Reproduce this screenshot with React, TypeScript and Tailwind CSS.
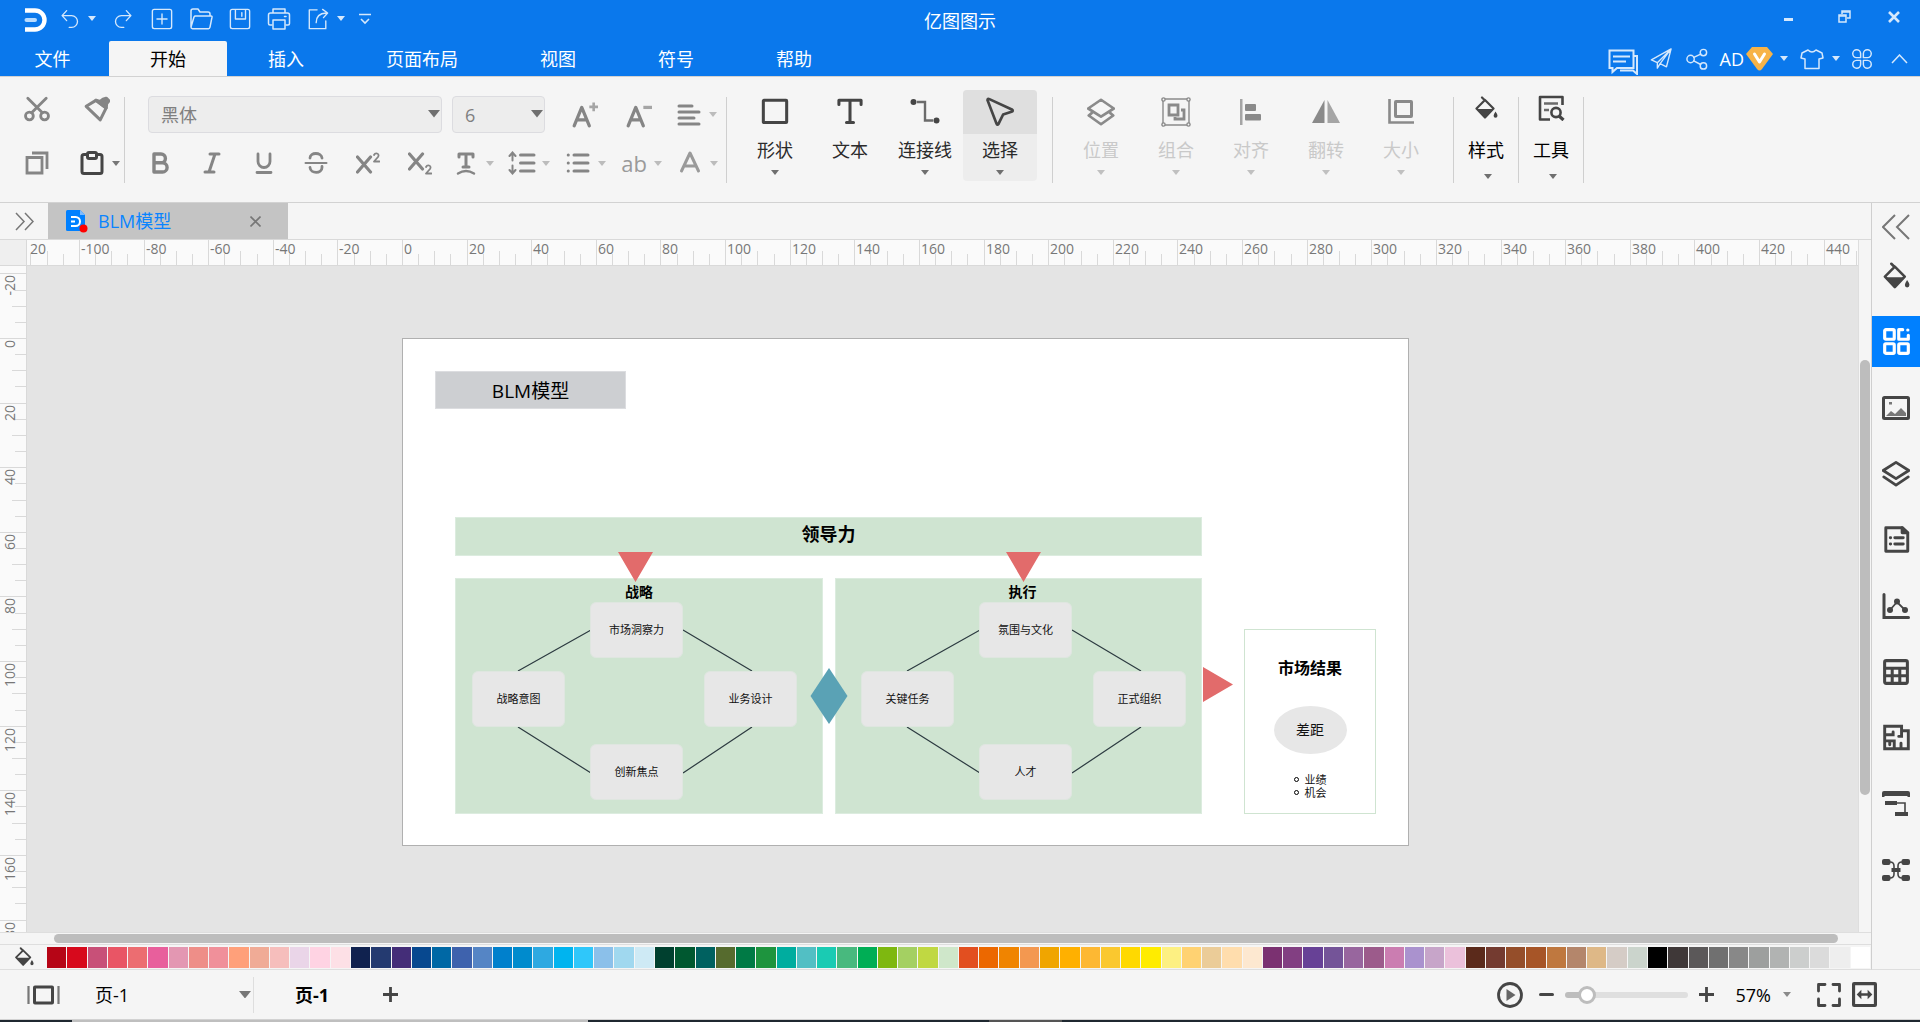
import { useState } from "react";
import type { ReactNode } from "react";

const SWATCHES = [
    "#b60516", "#d7091c", "#c85078", "#e95565", "#ec6d71", "#e85f9c", "#e397b2", "#ee8e88", "#f0909a", "#ffa07a",
    "#f0ab96", "#f6bebc", "#ead5e8", "#ffd3e3", "#fde0e6", "#10224f", "#243a70", "#442d78", "#07488f", "#0068a5",
    "#3e62ad", "#5585c5", "#0080cc", "#008bcd", "#2ea9e1", "#00b4ef", "#2fc7fa", "#8bc0ea", "#a0d8ef", "#ceeaf5",
    "#00402f", "#005830", "#006160", "#566b2e", "#007a45", "#1e943e", "#00ad9f", "#52bfc4", "#1acbb3", "#48b97e",
    "#00ae55", "#7eb810", "#a4d062", "#c0d842", "#cfe7ca", "#e24f20", "#ec6800", "#f08400", "#f39850", "#f0a500",
    "#ffb000", "#fdb833", "#fac82f", "#ffd900", "#ffec00", "#fdf082", "#ffd272", "#ebcc98", "#ffddad", "#fde8d0",
    "#7b3171", "#823f82", "#674196", "#745498", "#98669e", "#9c5b8b", "#cb7db1", "#aa92ce", "#c7a5c9", "#ebc1db",
    "#5b2a1b", "#743b30", "#954e2a", "#a75527", "#bf783f", "#b4866b", "#deb887", "#d5ccc6", "#cbd4cc", "#000000",
    "#3f3838", "#5b5859", "#707070", "#888888", "#9d9f9e", "#b1b3b2", "#cccecd", "#dbdbdb", "#eeeeee", "#ffffff",
];

const MENUS = ["插入", "页面布局", "视图", "符号", "帮助"];

// pixels per ruler unit at the current zoom
const SCALE = 3.231;

interface IconProps {
    children: ReactNode;
    className?: string;
    stroke?: number;
}

function Icon({ children, className = "size-6", stroke = 2 }: IconProps) {
    return (
        <svg viewBox="0 0 24 24" className={className} fill="none" stroke="currentColor" strokeWidth={stroke} strokeLinejoin="round" strokeLinecap="round" aria-hidden="true">
            {children}
        </svg>
    );
}

function Caret({ className = "w-2" }: { className?: string }) {
    return (
        <svg viewBox="0 0 8 5" className={className} fill="currentColor" aria-hidden="true">
            <path d="M0 0h8L4 5z" />
        </svg>
    );
}

function IconButton({ label, className, children }: { label: string; className: string; children: ReactNode }) {
    return (
        <button type="button" aria-label={label} className={`flex shrink-0 items-center justify-center ${className}`}>
            {children}
        </button>
    );
}

function SplitButton({ label, children }: { label: string; children: ReactNode }) {
    return (
        <button type="button" aria-label={label} className="flex w-14 shrink-0 items-center">
            <span className="flex w-10 justify-center">{children}</span>
            <Caret className="w-2 text-[#bcbcbc]" />
        </button>
    );
}

interface ToolButtonProps {
    label: string;
    caret?: boolean;
    active?: boolean;
    disabled?: boolean;
    children: ReactNode;
}

function ToolButton({ label, caret = true, active, disabled, children }: ToolButtonProps) {
    return (
        <button type="button" disabled={disabled} className={`flex h-[91px] w-[74px] flex-col items-center rounded-sm ${active ? "bg-[#ededed]" : ""}`}>
            <span className={`flex h-11 w-full items-center justify-center rounded-t-sm ${active ? "bg-[#dfdfdf]" : ""} ${disabled ? "text-[#8a8a8a]" : "text-[#454545]"}`}>
                {children}
            </span>
            <span className={`mt-1 leading-6 ${disabled ? "text-[#c9c9c9]" : "text-[#2b2b2b]"}`}>{label}</span>
            {caret && <Caret className={`mt-2 w-2 ${disabled ? "text-[#c0c0c0]" : "text-[#6f6f6f]"}`} />}
        </button>
    );
}

function PanelButton({ label, children }: { label: string; children: ReactNode }) {
    return (
        <button type="button" className="mt-[13px] flex h-[91px] w-16 flex-col items-center text-black">
            <span className="flex h-9 items-center text-[#454545]">{children}</span>
            <span className="mt-3 leading-6">{label}</span>
            <Caret className="mt-3 ml-1 w-2 text-[#6f6f6f]" />
        </button>
    );
}

function Divider() {
    return <div className="mt-5 h-[86px] w-px shrink-0 bg-[#cfcfcf]" />;
}

function AppLogo() {
    return (
        <svg viewBox="0 0 24 24" className="h-6 w-6" fill="none" aria-hidden="true">
            <path d="M1 2.5h10a9.5 9.5 0 0 1 0 19H1" stroke="#fff" strokeWidth="4.4" />
            <path d="M2.5 12h8.5" stroke="#b9dcff" strokeWidth="4" strokeLinecap="round" />
        </svg>
    );
}

function Header() {
    return (
        <header className="bg-[#0a78ec] text-[#d5e8fc]">
            <div className="grid h-[41px] grid-cols-[1fr_auto_1fr]">
                <div className="flex h-[31px] items-center self-start">
                    <div className="flex w-[52px] justify-end pr-1 pt-2"><AppLogo /></div>
                    <IconButton label="撤销" className="h-full w-9 pt-1.5">
                        <Icon className="size-5" stroke={1.6}><path d="M8 2 2.500 8 8 14M3 8h11a7 7 0 0 1 0 14h-3" /></Icon>
                    </IconButton>
                    <IconButton label="撤销列表" className="mr-[7px] h-full w-2 pt-1.5"><Caret /></IconButton>
                    <IconButton label="重做" className="h-full w-[39px] pt-1.5">
                        <Icon className="size-5" stroke={1.6}><path d="m16 2 5.500 6-5.500 6M21 8H10a7 7 0 0 0 0 14h3" /></Icon>
                    </IconButton>
                    <IconButton label="新建" className="h-full w-[39px] pt-1.5">
                        <Icon className="size-[22px]" stroke={1.5}><rect x="1.500" y="1.500" width="21" height="21" rx="2" /><path d="M12 6.500v11M6.500 12h11" /></Icon>
                    </IconButton>
                    <IconButton label="打开" className="h-full w-[39px] pt-1.5">
                        <Icon className="size-6" stroke={1.5}><path d="M2 20V4q0-2 2-2h5l2 3h8q2 0 2 2v2M2 20 5 10q.4-1 1.500-1H22q1.200 0 1 1.200l-2 10q-.3 1.500-1.500 1.500H3.500Q2 21.700 2 20" /></Icon>
                    </IconButton>
                    <IconButton label="保存" className="h-full w-[39px] pt-1.5">
                        <Icon className="size-[22px]" stroke={1.5}><rect x="1.500" y="1.500" width="21" height="21" rx="2" /><path d="M7 2v10h11V2M14 5v4" /></Icon>
                    </IconButton>
                    <IconButton label="打印" className="h-full w-[39px] pt-1.5">
                        <Icon className="size-6" stroke={1.5}><path d="M6 6V2h12v4M5 18H3q-1.500 0-1.500-1.500V8Q1.500 6 3.500 6h17q2 0 2 2v8.500Q22.500 18 21 18h-2" /><path d="M6 13h12v9H6zM17.500 9.500h1.500" /></Icon>
                    </IconButton>
                    <IconButton label="导出" className="h-full w-[39px] pt-1.5">
                        <Icon className="size-[22px]" stroke={1.5}><path d="M11 2H2.500v20.500h18V14M10 16q0-10 11-10.500M17 1.500l5.500 4-4.500 5" /></Icon>
                    </IconButton>
                    <IconButton label="导出列表" className="h-full w-2 pt-1.5"><Caret /></IconButton>
                    <IconButton label="自定义" className="ml-2 h-full w-6 pt-1.5">
                        <svg viewBox="0 0 12 12" className="size-3" fill="none" stroke="currentColor" strokeWidth="1.600"><path d="M0 1.500h12M2 6l4 4 4-4" /></svg>
                    </IconButton>
                </div>
                <h1 className="self-center text-lg leading-6 text-white">亿图图示</h1>
                <div className="flex h-[33px] items-center justify-end gap-2 pr-2">
                    <IconButton label="最小化" className="h-6 w-12 pt-1.5"><span className="h-[3px] w-[9px] bg-current" /></IconButton>
                    <IconButton label="还原" className="h-6 w-12">
                        <svg viewBox="0 0 13 13" className="size-[13px]" fill="none" stroke="currentColor" strokeWidth="1.500"><path d="M4 4V1h8v7H9" /><path d="M1 5h7v7H1z" /><path d="M4 2h8M1 6h7" /></svg>
                    </IconButton>
                    <IconButton label="关闭" className="h-6 w-9">
                        <svg viewBox="0 0 12 12" className="size-3" fill="none" stroke="currentColor" strokeWidth="2.600"><path d="m1 1 10 10M11 1 1 11" /></svg>
                    </IconButton>
                </div>
            </div>
            <div className="flex h-[35px] justify-between">
                <nav className="flex text-lg leading-9 text-white">
                    <button type="button" className="w-[109px] pr-1">文件</button>
                    <button type="button" className="rounded-t-xs bg-[#f5f5f5] px-[41px] text-black">开始</button>
                    {MENUS.map((menu) => (
                        <button type="button" key={menu} className="px-[41px]">{menu}</button>
                    ))}
                </nav>
                <div className="flex items-center pr-3">
                    <IconButton label="评论" className="mt-1.5 w-[30px]">
                        <svg viewBox="0 0 30 26" className="h-[26px] w-[30px]" fill="none" stroke="currentColor" strokeWidth="2"><path d="M1.500 1.500h24V19H9l-4.500 4v-4h-3zM5 7.500h17M5 12.500h13M26 7h3v18l-4-3.500H12" /></svg>
                    </IconButton>
                    <IconButton label="发送" className="ml-3 w-[22px]">
                        <Icon className="size-[22px]" stroke={1.5}><path d="M23 1 1.500 13l6.500 3L23 1 11 17l7 3.500zM8 16v6l3-5" /></Icon>
                    </IconButton>
                    <IconButton label="分享" className="ml-3.5 w-[22px]">
                        <Icon className="size-[22px]" stroke={1.6}><circle cx="5" cy="12" r="4" /><circle cx="19" cy="5" r="3.500" /><circle cx="19" cy="19.500" r="3.500" /><path d="m8.500 10.200 7.500-3.600M8.500 14l7.500 4" /></Icon>
                    </IconButton>
                    <button type="button" aria-label="AD" className="ml-3 flex items-center gap-[2px] text-lg text-white">
                        AD
                        <svg viewBox="0 0 27 25" className="h-[25px] w-[27px]" aria-hidden="true">
                            <path d="M6 1h15l6 7-11 15q-2.500 3-5 0L0 8z" fill="#f7b348" />
                            <path d="m8.500 8 5 8 5-8" fill="none" stroke="#fff" strokeWidth="3" strokeLinecap="round" strokeLinejoin="round" />
                        </svg>
                    </button>
                    <Caret className="ml-[7px] w-2" />
                    <IconButton label="皮肤" className="ml-3 w-6">
                        <Icon className="size-6" stroke={1.5}><path d="M8 3q4 4 8 0l6 3 1 5-4 1v9.500H5V12l-4-1 1-5z" /></Icon>
                    </IconButton>
                    <Caret className="ml-2 w-2" />
                    <IconButton label="应用" className="ml-[11px] w-[22px]">
                        <Icon className="size-[22px]" stroke={1.6}><path d="M10.500 10.500H6A4.300 4.300 0 1 1 10.500 6zM13.500 10.500V6a4.300 4.300 0 1 1 4.500 4.500zM10.500 13.500V18A4.300 4.300 0 1 1 6 13.500zM13.500 13.500H18a4.300 4.300 0 1 1-4.500 4.500z" /></Icon>
                    </IconButton>
                    <IconButton label="收起功能区" className="ml-[18px] w-[17px]">
                        <svg viewBox="0 0 17 10" className="w-[17px]" fill="none" stroke="currentColor" strokeWidth="1.500"><path d="m1 9 7.500-8L16 9" /></svg>
                    </IconButton>
                </div>
            </div>
        </header>
    );
}

function BucketIcon({ className }: { className?: string }) {
    return (
        <Icon className={className}>
            <path d="m8 1.500 3 3M11 4 2.500 12.500l8.500 9 8.500-9z" strokeWidth="2.200" />
            <path d="M3 13h16l-8 8.500z" fill="currentColor" stroke="none" />
            <path d="M21.500 15.500q2.200 3 2 4.300a1.900 1.900 0 0 1-3.900 0q0-1.300 1.900-4.300" fill="currentColor" stroke="none" />
        </Icon>
    );
}

function Ribbon() {
    return (
        <section className="flex h-[127px] border-y border-[#d2d2d2] bg-[#f5f5f5] text-lg">
            <div className="grid w-[124px] grid-cols-[74px_50px] grid-rows-[64px_44px] text-[#858585]">
                <IconButton label="剪切" className="w-[74px]">
                    <Icon className="size-[26px]" stroke={2.6}><circle cx="5" cy="18.500" r="3.600" /><circle cx="19" cy="18.500" r="3.600" /><path d="M3.500 2 17 15.500M20.500 2 7 15.500" /></Icon>
                </IconButton>
                <IconButton label="格式刷" className="w-[46px]">
                    <Icon className="size-[26px]" stroke={2.8}><path d="m2 9.500 9-5.500 9.500 7L15 22z" /><path d="m11 4 9.500 7 .5-4 2-2.500-2.500-2.500-3 1-2.500 2z" fill="currentColor" /></Icon>
                </IconButton>
                <IconButton label="复制" className="w-[74px]">
                    <Icon className="size-6" stroke={2.8}><path d="M2 6.500h15V22H2zM7 2h15v16" strokeLinejoin="miter" strokeLinecap="butt" /></Icon>
                </IconButton>
                <button type="button" aria-label="粘贴" className="flex items-center gap-2 pl-1.5 text-[#454545]">
                    <Icon className="size-6" stroke={3}><rect x="2" y="3.500" width="20" height="19" rx="2" /><rect x="7.500" y="1.500" width="9" height="6" rx="1.500" fill="#f5f5f5" /></Icon>
                    <Caret className="w-2 text-[#777]" />
                </button>
            </div>
            <Divider />
            <div className="flex flex-col">
                <div className="mt-[19px] flex h-[37px] items-center pl-[23px] text-[#858585]">
                    <div className="relative h-full w-[294px]">
                        <select aria-label="字体" className="h-full w-full appearance-none rounded-sm border border-[#dcdce0] bg-[#ededed] px-3 text-lg leading-6 text-[#808080]">
                            <option>黑体</option>
                        </select>
                        <Caret className="pointer-events-none absolute top-3.5 right-0.5 w-3 text-[#6f6f6f]" />
                    </div>
                    <div className="relative ml-2.5 h-full w-[93px]">
                        <select aria-label="字号" className="h-full w-full appearance-none rounded-sm border border-[#dcdce0] bg-[#ededed] px-3 text-lg leading-6 text-[#808080]">
                            <option>6</option>
                        </select>
                        <Caret className="pointer-events-none absolute top-3.5 right-0.5 w-3 text-[#6f6f6f]" />
                    </div>
                    <IconButton label="增大字号" className="ml-[13px] w-[54px]">
                        <Icon className="size-[26px]" stroke={3}><path d="M2 22 9 5l7 17M4.500 16.500h9" /><path d="M16 4.500h8M20 .5v8" strokeWidth="2.400" strokeLinecap="butt" stroke="#a5a5a5" /></Icon>
                    </IconButton>
                    <IconButton label="减小字号" className="w-[54px]">
                        <Icon className="size-[26px]" stroke={3}><path d="M2 22 9 5l7 17M4.500 16.500h9" /><path d="M16 5h8" strokeWidth="3" strokeLinecap="butt" stroke="#a5a5a5" /></Icon>
                    </IconButton>
                    <div className="ml-[3px] flex">
                        <SplitButton label="对齐方式">
                            <Icon className="size-6" stroke={3}><path d="M2 3h13M2 9h20M2 15h15M2 21h20" /></Icon>
                        </SplitButton>
                    </div>
                </div>
                <div className="mt-[15px] flex h-[30px] items-center pl-[9px] text-[#858585]">
                    <IconButton label="加粗" className="w-[52px]"><Icon className="size-6"><path d="M6 3h7a4.300 4.300 0 0 1 0 8.800H6zM6 11.800h8.500a4.500 4.500 0 0 1 0 9.200H6z" strokeWidth="3.400" /></Icon></IconButton>
                    <IconButton label="倾斜" className="w-[52px]"><Icon className="size-6" stroke={3}><path d="M10 3h9M5 21h9M15 3 9 21" /></Icon></IconButton>
                    <IconButton label="下划线" className="w-[52px]"><Icon className="size-6" stroke={2.8}><path d="M6 3v7.500a6 6 0 0 0 12 0V3M5 21.500h14" /></Icon></IconButton>
                    <IconButton label="删除线" className="w-[52px]"><Icon className="size-6"><path d="M1.500 12h21" /><path d="M18 7c-.5-6-12-6-12 0M6 16.500c.5 6.500 12 6.500 12 0v-1" strokeWidth="2.800" /></Icon></IconButton>
                    <IconButton label="上标" className="w-[52px]"><Icon className="size-6" stroke={3.2}><path d="m1.500 6 13 15M14.500 6l-13 15" /><path d="M18 4q1-2 3-1.500 2.500 1 1 3.500L18 10.500h5.500" strokeWidth="1.800" /></Icon></IconButton>
                    <IconButton label="下标" className="w-[52px]"><Icon className="size-6" stroke={3.2}><path d="m1.500 3 13 15M14.500 3l-13 15" /><path d="M18 16q1-2 3-1.500 2.500 1 1 3.500L18 22.500h5.500" strokeWidth="1.800" /></Icon></IconButton>
                    <SplitButton label="文字方向"><Icon className="size-6"><path d="M5 6V3h14v3M12 3v13M9 16h6" strokeWidth="3" /><path d="M4 22.500q8-5 16 0" strokeWidth="2.400" /></Icon></SplitButton>
                    <SplitButton label="行距">
                        <svg viewBox="0 0 28 24" className="h-6 w-7" fill="none" stroke="currentColor" strokeWidth="3" strokeLinecap="round"><path d="M12.500 4H26M12.500 12H26M12.500 20H26" /><path d="M4.500 2.500v7M1.500 5l3-3.500 3 3.500M4.500 14.500v7M1.500 19l3 3.500 3-3.500" strokeWidth="2" /></svg>
                    </SplitButton>
                    <SplitButton label="项目符号"><Icon className="size-6" stroke={3}><path d="M8 4h14M8 12h14M8 20h14M2.200 4h.1M2.200 12h.1M2.200 20h.1" /></Icon></SplitButton>
                    <SplitButton label="突出显示"><span className="font-['Open_Sans',sans-serif] text-[22px] leading-6 font-medium text-[#9a9a9a]">ab</span></SplitButton>
                    <SplitButton label="字体颜色"><Icon className="size-6 text-[#9a9a9a]" stroke={3}><path d="m3.500 20 8.500-18 8.500 18M6.500 15h11" /></Icon></SplitButton>
                </div>
            </div>
            <Divider />
            <div className="flex gap-px pt-[13px] pr-[15px] pl-[11px]">
                <ToolButton label="形状">
                    <Icon className="size-7" stroke={2.6}><rect x="2" y="2" width="20" height="19" rx=".5" /></Icon>
                </ToolButton>
                <ToolButton label="文本" caret={false}>
                    <Icon className="size-7" stroke={2.6}><path d="M2.500 5.500V2h19v3.500M12 2v19M9 21h6" /></Icon>
                </ToolButton>
                <ToolButton label="连接线">
                    <svg viewBox="0 0 30 26" className="h-[26px] w-[30px]" fill="none"><path d="M7 3h8v18.500h8" stroke="#6b6b6b" strokeWidth="2.400" /><circle cx="3.500" cy="3" r="3" fill="currentColor" /><circle cx="26.500" cy="21.500" r="3" fill="currentColor" /></svg>
                </ToolButton>
                <ToolButton label="选择" active>
                    <Icon className="size-[30px]" stroke={2.2}><path d="M2 2.500Q2 1 3.500 1.700L21.500 10q1.500 1-.3 1.800L14.500 14l-3.700 7.500q-1 1.400-1.600-.2z" /></Icon>
                </ToolButton>
            </div>
            <Divider />
            <div className="flex gap-px pt-[13px] pr-[15px] pl-[11px]">
                <ToolButton label="位置" disabled>
                    <Icon className="size-7" stroke={2.3}><path d="M12 1.500 23 9l-11 7L1 9zM1.500 15 12 22.500 22.500 15l-2.500-2M1.500 15 4 13" /></Icon>
                </ToolButton>
                <ToolButton label="组合" disabled>
                    <svg viewBox="0 0 30 30" className="size-[30px]" fill="none" stroke="currentColor" strokeWidth="1.400">
                        <path d="M3 2h24M3 28h24M2 3v24M28 3v24" />
                        <path d="M8 8h9v10H8zM20 13h3v9h-9v-2" strokeWidth="2.800" />
                        <circle cx="2.500" cy="2.500" r="1.600" fill="#f5f5f5" /><circle cx="27.500" cy="2.500" r="1.600" fill="#f5f5f5" />
                        <circle cx="2.500" cy="27.500" r="1.600" fill="#f5f5f5" /><circle cx="27.500" cy="27.500" r="1.600" fill="#f5f5f5" />
                    </svg>
                </ToolButton>
                <ToolButton label="对齐" disabled>
                    <svg viewBox="0 0 24 28" className="h-7 w-6" fill="currentColor"><path d="M1 1h2.500v26H1z" opacity=".75" /><rect x="6" y="6" width="11" height="7" rx="1" /><rect x="6" y="16" width="16" height="6.500" rx="1" /></svg>
                </ToolButton>
                <ToolButton label="翻转" disabled>
                    <svg viewBox="0 0 28 26" className="h-[26px] w-7" fill="currentColor"><path d="M12.500 1v23H0z" /><path d="M15.500 1v23H28z" opacity=".75" /></svg>
                </ToolButton>
                <ToolButton label="大小" disabled>
                    <svg viewBox="0 0 26 26" className="size-[26px]" fill="none" stroke="currentColor" strokeWidth="2.600"><path d="M1.500 0v23.500H26" /><rect x="7.500" y="2.500" width="16" height="15" rx=".5" strokeWidth="3" /></svg>
                </ToolButton>
            </div>
            <Divider />
            <PanelButton label="样式"><BucketIcon className="size-6" /></PanelButton>
            <Divider />
            <PanelButton label="工具">
                <svg viewBox="0 0 27 26" className="h-[26px] w-[27px]" fill="none" stroke="currentColor" strokeWidth="2.600" strokeLinejoin="round">
                    <path d="M12 24.500H2V2h22.500v8" /><path d="M6 8.500h14M6 15h5" stroke="#6b6b6b" />
                    <circle cx="18" cy="17.500" r="4.600" /><path d="m21 21 4.500 4" strokeWidth="3.200" />
                </svg>
            </PanelButton>
            <Divider />
        </section>
    );
}

function DocumentTabs() {
    return (
        <div className="flex h-[37px] items-stretch border-b border-[#d9d9d9] bg-[#f5f5f5]">
            <IconButton label="展开符号库" className="w-12">
                <svg viewBox="0 0 19 19" className="size-[19px]" fill="none" stroke="#777" strokeWidth="1.500"><path d="m1 1 8 8.500L1 18M10 1l8 8.500-8 8.500" /></svg>
            </IconButton>
            <div className="flex w-60 items-center bg-[#c4c4c4] pl-[18px] text-lg leading-6 text-[#0a84ff]">
                <svg viewBox="0 0 22 23" className="h-[23px] w-[22px]" aria-hidden="true">
                    <path d="M1.500 0H14l5 5v16H1.500Q0 21 0 19.500v-18Q0 0 1.500 0" fill="#0080ff" />
                    <path d="M14 0v5h5z" fill="#7fbcff" />
                    <path d="M5 7h4.500a4.200 4.200 0 0 1 0 9H5M5 11.500h4" fill="none" stroke="#fff" strokeWidth="2" />
                    <circle cx="17.500" cy="18.500" r="4" fill="#f00" />
                </svg>
                <span className="ml-2.5 flex-1">BLM模型</span>
                <IconButton label="关闭标签" className="mr-[27px] w-3">
                    <svg viewBox="0 0 11 11" className="size-[11px]" fill="none" stroke="#777" strokeWidth="1.600"><path d="m.5.500 10 10M10.500.500l-10 10" /></svg>
                </IconButton>
            </div>
        </div>
    );
}

function tickRange(from: number, to: number, step: number) {
    const out: number[] = [];
    for (let v = from; v <= to; v += step) out.push(v);
    return out;
}

function HorizontalRuler() {
    return (
        <svg className="block h-[25px] min-w-0 flex-1 bg-[#fafafa] font-['Open_Sans',sans-serif] text-sm" aria-hidden="true">
            {tickRange(-115, 600, 5).map((v) => {
                const x = Math.round(375 + v * SCALE) + 0.5;
                const top = v % 20 === 0 ? 0 : v % 10 === 0 ? 11 : 14;
                return <path key={v} d={`M${x} ${top}V25`} stroke="#d9d9d9" />;
            })}
            <text x="3" y="14" fill="#777">20</text>
            {tickRange(-100, 440, 20).map((v) => (
                <text key={v} x={Math.round(377 + v * SCALE)} y="14" fill="#777">{v}</text>
            ))}
        </svg>
    );
}

function VerticalRuler() {
    return (
        <svg className="block h-full w-[26px] shrink-0 bg-[#fafafa] font-['Open_Sans',sans-serif] text-sm" aria-hidden="true">
            {tickRange(-20, 400, 5).map((v) => {
                const y = Math.round(72 + v * SCALE) + 0.5;
                const left = v % 20 === 0 ? 0 : v % 10 === 0 ? 12 : 15;
                return <path key={v} d={`M${left} ${y}H26`} stroke="#d9d9d9" />;
            })}
            {tickRange(-20, 180, 20).map((v) => {
                const y = Math.round(74 + v * SCALE);
                return <text key={v} transform={`translate(15 ${y}) rotate(-90)`} textAnchor="end" fill="#777">{v}</text>;
            })}
        </svg>
    );
}

const NODE = "absolute flex h-14 w-[93px] items-center justify-center rounded-md border border-[#dfe6e0] bg-[#e7e7e7]";
const BOX = "absolute border border-[#dcecdf] bg-[#cfe4d1]";

function Page() {
    return (
        <div className="absolute top-[72px] left-[375px] h-[508px] w-[1007px] border border-[#b0b0b0] bg-white text-[11px] text-[#111]">
            <div className="absolute top-8 left-8 flex h-[38px] w-[191px] items-center justify-center border border-[#dcdde0] bg-[#cdcfd2] pt-0.5 text-[19px] text-black">BLM模型</div>
            <div className={`${BOX} top-[178px] left-[52px] h-[39px] w-[747px] pt-1 text-center text-lg leading-6 font-bold text-black`}>领导力</div>
            <div className={`${BOX} top-[239px] left-[52px] h-[236px] w-[368px] pt-[3px] text-center text-sm leading-5 font-bold text-black`}>战略</div>
            <div className={`${BOX} top-[239px] left-[432px] h-[236px] w-[367px] pt-[3px] pl-2 text-center text-sm leading-5 font-bold text-black`}>执行</div>
            <svg className="absolute inset-0 size-full" fill="none" stroke="#2c3a40" strokeWidth="1.200">
                <path d="m115 332 73-41M280 291l69 41M115 388l73 46M349 388l-69 46" />
                <path d="m504 332 73-41M669 291l69 41M504 388l73 46M738 388l-69 46" />
                <g stroke="none" fill="#e26b6b">
                    <path d="M215 213h35l-17.500 30zM603 213h35l-17.500 30zM800 328v35l30-17.500z" />
                    <path d="m426 329 18.500 28-18.500 28-18.500-28z" fill="#5aa2b5" />
                </g>
            </svg>
            <div className={`${NODE} top-[263px] left-[187px]`}>市场洞察力</div>
            <div className={`${NODE} top-[332px] left-[69px]`}>战略意图</div>
            <div className={`${NODE} top-[332px] left-[301px]`}>业务设计</div>
            <div className={`${NODE} top-[405px] left-[187px]`}>创新焦点</div>
            <div className={`${NODE} top-[263px] left-[576px]`}>氛围与文化</div>
            <div className={`${NODE} top-[332px] left-[458px]`}>关键任务</div>
            <div className={`${NODE} top-[332px] left-[690px]`}>正式组织</div>
            <div className={`${NODE} top-[405px] left-[576px]`}>人才</div>
            <div className="absolute top-[290px] left-[841px] flex h-[185px] w-[132px] flex-col items-center border border-[#cfe4d1] pt-[26px]">
                <h2 className="text-base leading-6 font-bold text-black">市场结果</h2>
                <div className="mt-[26px] flex h-12 w-[73px] items-center justify-center rounded-[50%] bg-[#e7e7e7] text-sm">差距</div>
                <ul className="mt-[19px] leading-[13px]">
                    {["业绩", "机会"].map((item) => (
                        <li key={item} className="flex items-center gap-1.5">
                            <span className="size-[5px] rounded-full border border-black" />
                            {item}
                        </li>
                    ))}
                </ul>
            </div>
        </div>
    );
}

function Palette() {
    return (
        <div className="flex h-[24px] items-center bg-[#f5f5f5]">
            <IconButton label="填充颜色" className="w-[47px] text-[#454545]"><BucketIcon className="size-5" /></IconButton>
            <div className="mr-px flex h-[21px] flex-1 gap-px">
                {SWATCHES.map((color) => (
                    <button type="button" key={color} aria-label={color} className="h-full flex-1" style={{ backgroundColor: color }} />
                ))}
            </div>
        </div>
    );
}

function Sidebar() {
    const item = "h-[51px] w-12 mb-[15px]";
    return (
        <aside className="flex w-[49px] shrink-0 flex-col border-b border-l border-[#cfcfcf] border-b-[#dedede] bg-[#f5f5f5] text-[#454545]">
            <IconButton label="展开面板" className="h-[47px] w-12">
                <svg viewBox="0 0 28 26" className="h-[26px] w-7" fill="none" stroke="#777" strokeWidth="2"><path d="M13 1 1 13l12 12M27 1 15 13l12 12" /></svg>
            </IconButton>
            <IconButton label="填充" className={item}><BucketIcon className="size-7" /></IconButton>
            <IconButton label="符号" className={`${item} bg-[#0080ff] text-white`}>
                <Icon className="size-[27px]" stroke={2.8}><rect x="1.500" y="1.500" width="8.500" height="8.500" rx="1" /><rect x="1.500" y="14" width="8.500" height="8.500" rx="1" /><rect x="14" y="14" width="8.500" height="8.500" rx="1" /><path d="M17.500 1.500H14V10h8.500V6.500" /><path d="M22 1.800h.1" /></Icon>
            </IconButton>
            <IconButton label="图片" className={item}>
                <svg viewBox="0 0 28 24" className="h-6 w-7" fill="none" stroke="currentColor" strokeWidth="3"><rect x="1.500" y="1.500" width="25" height="21" rx="1" /><path d="m4 20 5-5 4 3 6-6 5 5v3zM7 6h3v2.500H7z" fill="#777" stroke="none" /></svg>
            </IconButton>
            <IconButton label="图层" className={item}>
                <Icon className="size-7" stroke={2.4}><path d="m12 2 11 7-11 7L1 9zM1.500 14.500 12 21.500l10.500-7" /></Icon>
            </IconButton>
            <IconButton label="属性" className={item}>
                <Icon className="size-[27px]" stroke={2.6}><path d="M2.500 1.500H17L22 6v16.500H2.500zM10.500 10.500H18M10.500 16H18M6.500 10.500h.3M6.500 16h.3" /><path d="M17 1.500 22 6h-5z" fill="currentColor" /></Icon>
            </IconButton>
            <IconButton label="图表" className={item}>
                <svg viewBox="0 0 28 26" className="h-[26px] w-7" fill="none" stroke="currentColor" strokeWidth="1.800" strokeLinecap="round"><path d="M2 1.500V24.500h24.500" strokeWidth="3" /><path d="m8 17 7-8 8 8" /><g fill="currentColor" stroke="none"><circle cx="8" cy="17" r="3" /><circle cx="15" cy="8.500" r="3" /><circle cx="23" cy="17" r="3" /></g></svg>
            </IconButton>
            <IconButton label="表格" className={item}>
                <Icon className="size-[26px]" stroke={2.8}><rect x="1.500" y="1.500" width="21" height="21" rx="1.500" /><path d="M2 8.500h20M2 15.500h20M8.500 9v13M15.500 9v13" /></Icon>
            </IconButton>
            <IconButton label="平面图" className={item}>
                <Icon className="size-[27px]" stroke={2.6}><path d="M1.500 2h15v4h6v16h-21zM1.500 9.500H9V7M16.500 6v5H14M1.500 15H10v7M6 15v3.500M16 22v-5" strokeLinejoin="miter" /></Icon>
            </IconButton>
            <IconButton label="甘特图" className={item}>
                <svg viewBox="0 0 28 25" className="h-[25px] w-7" fill="currentColor"><path d="M2 0h24q2 0 2 2v4h-2.500V5h-23v1H0V2q0-2 2-2M3 10h12v4H3zM13 21h13v4H13z" /><path d="M14 12h9v10" fill="none" stroke="currentColor" strokeWidth="1.600" /></svg>
            </IconButton>
            <IconButton label="思维导图" className={item}>
                <svg viewBox="0 0 28 24" className="h-6 w-7" fill="currentColor"><rect y="1" width="8.500" height="6" rx="2" /><rect x="19.500" y="1" width="8.500" height="6" rx="2" /><rect y="17" width="8.500" height="6" rx="2" /><rect x="19.500" y="17" width="8.500" height="6" rx="2" /><path d="M9.500 10h9v4h-9z" /><path d="M8 4q4 0 4 4v8q0 4-4 4M20 4q-4 0-4 4v8q0 4 4 4" fill="none" stroke="currentColor" strokeWidth="1.600" /></svg>
            </IconButton>
        </aside>
    );
}

function StatusBar() {
    const [zoom, setZoom] = useState(13);

    return (
        <footer className="flex h-[50px] items-center border-b border-[#d2d2d2] bg-[#f5f5f5] text-lg text-black">
            <IconButton label="页面面板" className="ml-[27px] w-[33px] text-[#454545]">
                <svg viewBox="0 0 33 20" className="h-5 w-[33px]" fill="none" stroke="currentColor" strokeWidth="3"><path d="M1.500 1v18M31.500 1v18" strokeWidth="2.200" stroke="#777" /><rect x="7.500" y="2" width="18" height="16" rx=".5" /></svg>
            </IconButton>
            <div className="relative ml-[23px] h-9 w-[171px] border-r border-[#dedede]">
                <select aria-label="页面" className="h-full w-full appearance-none bg-transparent pl-3 text-lg leading-6">
                    <option>页-1</option>
                </select>
                <Caret className="pointer-events-none absolute top-3.5 right-0.5 w-3 text-[#777]" />
            </div>
            <button type="button" className="ml-[41px] font-bold">页-1</button>
            <IconButton label="新增页面" className="ml-[53px] w-4 text-[#454545]">
                <svg viewBox="0 0 15 15" className="size-[15px]" stroke="currentColor" strokeWidth="2.800"><path d="M7.500 0v15M0 7.500h15" /></svg>
            </IconButton>
            <div className="ml-auto flex items-center pr-[43px] text-[#454545]">
                <IconButton label="播放" className="w-[26px]">
                    <svg viewBox="0 0 26 26" className="size-[26px]" fill="none"><circle cx="13" cy="13" r="11.500" stroke="currentColor" strokeWidth="2.800" /><path d="m9.500 7 9 6-9 6z" fill="#666" /></svg>
                </IconButton>
                <IconButton label="缩小" className="ml-4 w-[15px]"><span className="h-[3px] w-[15px] rounded-full bg-current" /></IconButton>
                <input
                    type="range"
                    aria-label="缩放"
                    value={zoom}
                    onChange={(e) => setZoom(Number(e.target.value))}
                    className="mx-[11px] h-1.5 w-[123px] appearance-none rounded-full [&::-webkit-slider-thumb]:size-[18px] [&::-webkit-slider-thumb]:appearance-none [&::-webkit-slider-thumb]:rounded-full [&::-webkit-slider-thumb]:border-3 [&::-webkit-slider-thumb]:border-[#bdbdbd] [&::-webkit-slider-thumb]:bg-white"
                    style={{ background: `linear-gradient(to right, #bdbdbd ${zoom + 5}%, #dfdfdf ${zoom + 5}%)` }}
                />
                <IconButton label="放大" className="w-[15px]">
                    <svg viewBox="0 0 15 15" className="size-[15px]" stroke="currentColor" strokeWidth="2.800"><path d="M7.500 0v15M0 7.500h15" /></svg>
                </IconButton>
                <button type="button" className="ml-[22px] flex items-center gap-3 text-black">
                    57%
                    <Caret className="w-2 text-[#8a8a8a]" />
                </button>
                <IconButton label="全屏" className="ml-[26px] w-6">
                    <Icon className="size-6" stroke={2.8}><path d="M1.500 8V1.500H8M16 1.500h6.500V8M22.500 16v6.500H16M8 22.500H1.500V16" /></Icon>
                </IconButton>
                <IconButton label="适合宽度" className="ml-[11px] w-[25px]">
                    <Icon className="size-[25px]" stroke={2.6}><rect x="1.500" y="1.500" width="21" height="21" rx=".5" strokeWidth="3" /><path d="M7 12h10" /><path d="M9 7.500 4.500 12 9 16.500zM15 7.500l4.500 4.500-4.500 4.500z" fill="currentColor" stroke="none" /></Icon>
                </IconButton>
            </div>
        </footer>
    );
}

export default function App() {
    return (
        <div className="flex h-screen flex-col overflow-hidden bg-[#f5f5f5] font-['Open_Sans','Noto_Sans_CJK_SC',sans-serif]">
            <Header />
            <Ribbon />
            <div className="flex min-h-0 flex-1">
                <main className="flex min-w-0 flex-1 flex-col">
                    <DocumentTabs />
                    <div className="flex min-h-0 flex-1 border-b border-[#dedede]">
                        <div className="flex min-w-0 flex-1 flex-col">
                            <div className="flex border-b border-[#d9d9d9]">
                                <div className="w-[27px] border-r border-[#d9d9d9] bg-[#efefef]" />
                                <HorizontalRuler />
                            </div>
                            <div className="flex min-h-0 flex-1">
                                <VerticalRuler />
                                <div className="relative min-w-0 flex-1 overflow-hidden border-l border-[#d9d9d9] bg-[#e4e4e4]">
                                    <Page />
                                </div>
                            </div>
                        </div>
                        <div className="w-[13px] border-l border-[#dedede] pt-[120px] pl-px">
                            <div className="h-[435px] w-2.5 rounded-full bg-[#bdbdbd]" />
                        </div>
                    </div>
                    <div className="h-3 border-b border-[#dedede] pt-px pr-[33px] pl-[54px]">
                        <div className="h-[9px] rounded-full bg-[#bdbdbd]" />
                    </div>
                    <div className="border-b border-[#dedede]">
                        <Palette />
                    </div>
                </main>
                <Sidebar />
            </div>
            <StatusBar />
            <div className="flex h-0.5 shrink-0 bg-[#1f2830]">
                <div className="ml-[72px] w-[516px] bg-[#bfbfbf]" />
                <div className="ml-[401px] w-[73px] bg-[#555]" />
            </div>
        </div>
    );
}
